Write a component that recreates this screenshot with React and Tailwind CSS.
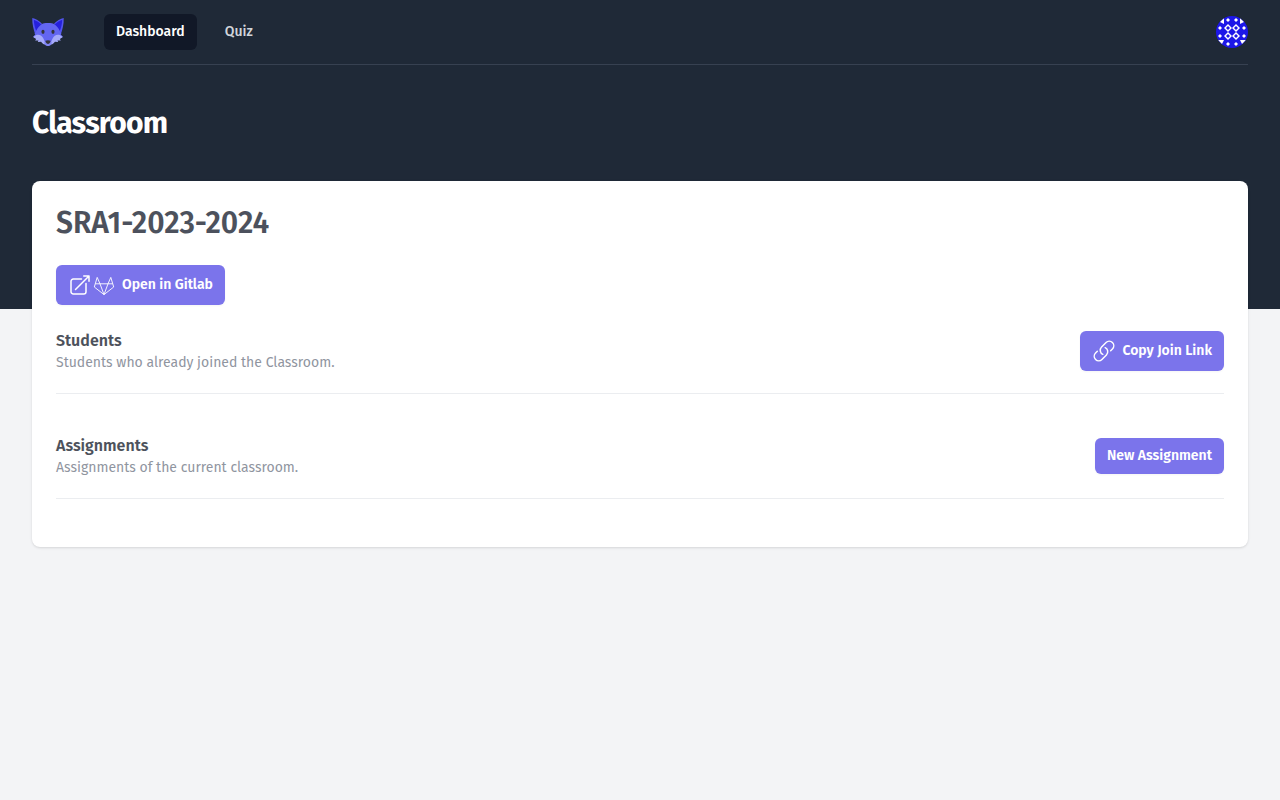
const FoxLogo = () => (
  <svg viewBox="0 0 32 32" className="size-8" role="img" aria-label="Home">
    {/* ears */}
    <path d="M0.3 2C3.5 2.6 7.5 4.8 9.8 7.6L7 17L3.4 19C1.5 13.5 0 7.5 0.3 2Z" fill="#5356ee" />
    <path d="M31.7 2C28.5 2.6 24.5 4.8 22.2 7.6L25 17L28.6 19C30.5 13.5 32 7.5 31.7 2Z" fill="#5356ee" />
    <path d="M1.8 3.7C4.6 4.7 7.6 6.6 9.6 8.6L4.4 15.2C2.8 11.7 1.8 7.4 1.8 3.7Z" fill="#2620dc" />
    <path d="M30.2 3.7C27.4 4.7 24.4 6.6 22.4 8.6L27.6 15.2C29.2 11.7 30.2 7.4 30.2 3.7Z" fill="#2620dc" />
    {/* head */}
    <path
      d="M16 7C12.8 7 10.9 7 9 8.7C6.3 10.8 4.6 13.6 3.6 16.4L2.4 17.5L3.6 18.1L1.2 20.8L16 29.2L30.8 20.8L28.4 18.1L29.6 17.5L28.4 16.4C27.4 13.6 25.7 10.8 23 8.7C21.1 7 19.2 7 16 7Z"
      fill="#6366f1"
    />
    {/* cheeks */}
    <path
      d="M4.2 19.1C7.2 18.1 10.2 19.7 11.4 22.4L13.8 27.8L12.4 28.4C10.8 27.9 9.8 26.8 9.1 25.7L5.8 26L6.5 24.6L3.1 24.5L4.2 22.9L1.1 21.1Z"
      fill="#a5aafa"
    />
    <path
      d="M27.8 19.1C24.8 18.1 21.8 19.7 20.6 22.4L18.2 27.8L19.6 28.4C21.2 27.9 22.2 26.8 22.9 25.7L26.2 26L25.5 24.6L28.9 24.5L27.8 22.9L30.9 21.1Z"
      fill="#a5aafa"
    />
    <path d="M12.2 25.4C13.8 27 18.2 27 19.8 25.4L19.4 28.2C18.3 30.6 13.7 30.6 12.6 28.2Z" fill="#8085f5" />
    <path d="M13.4 24.7Q16 23.8 18.6 24.7C18.3 26.8 16.9 28 16 28C15.1 28 13.7 26.8 13.4 24.7Z" fill="#34343b" />
    <ellipse cx="11" cy="15.8" rx="1.6" ry="2.1" fill="#34343b" />
    <ellipse cx="21" cy="15.8" rx="1.6" ry="2.1" fill="#34343b" />
  </svg>
);

const Identicon = () => (
  <svg viewBox="0 0 32 32" className="size-8 rounded-full" aria-hidden="true">
    <rect width="32" height="32" fill="#1d17e8" />
    <g fill="#fff">
      <path d="M12 2l2 2-2 2-2-2zM20 2l2 2-2 2-2-2zM12 26l2 2-2 2-2-2zM20 26l2 2-2 2-2-2z" />
      <path d="M4 10l2 2-2 2-2-2zM4 18l2 2-2 2-2-2zM28 10l2 2-2 2-2-2zM28 18l2 2-2 2-2-2z" />
      <path d="M8 2v6L4 6zM24 2v6l4-2zM2 24h6l-2 4zM30 24h-6l2 4z" />
      <path
        fillRule="evenodd"
        d="M12 8l4 4-4 4-4-4zm0 2l-2 2 2 2 2-2zM20 8l4 4-4 4-4-4zm0 2l-2 2 2 2 2-2zM12 16l4 4-4 4-4-4zm0 2l-2 2 2 2 2-2zM20 16l4 4-4 4-4-4zm0 2l-2 2 2 2 2-2z"
      />
    </g>
  </svg>
);

const OpenIcon = () => (
  <svg viewBox="0 0 24 24" className="size-6" fill="none" stroke="currentColor" strokeWidth="1.5" strokeLinecap="round" strokeLinejoin="round" aria-hidden="true">
    <path d="M13.5 6H5.25A2.25 2.25 0 003 8.25v10.5A2.25 2.25 0 005.25 21h10.5A2.25 2.25 0 0018 18.75V10.5m-10.5 6L21 3m0 0h-5.25M21 3v5.25" />
  </svg>
);

const GitlabIcon = () => (
  <svg viewBox="0 0 24 24" className="size-6" fill="none" stroke="currentColor" strokeWidth="0.9" strokeLinejoin="round" aria-hidden="true">
    <path d="M5.2 4.4L2.3 14L12 21.6L21.7 14L18.8 4.4L16 10.8H8zM3.3 10.8H8L12 21.6L16 10.8h4.7" />
  </svg>
);

const LinkIcon = () => (
  <svg viewBox="0 0 24 24" className="size-6" fill="none" stroke="currentColor" strokeWidth="1.5" strokeLinecap="round" strokeLinejoin="round" aria-hidden="true">
    <path d="M13.19 8.688a4.5 4.5 0 011.242 7.244l-4.5 4.5a4.5 4.5 0 01-6.364-6.364l1.757-1.757m13.35-.622l1.757-1.757a4.5 4.5 0 00-6.364-6.364l-4.5 4.5a4.5 4.5 0 001.242 7.244" />
  </svg>
);

const buttonClass =
  "inline-flex items-center rounded-md bg-[#4f46e5] px-3 py-2 text-sm font-semibold text-white shadow-xs hover:bg-[#6366f1]";

const Section = ({ title, description, children }) => (
  <div className="flex items-center justify-between border-b border-[#e5e7eb] pb-5">
    <div>
      <h3 className="text-base leading-6 font-semibold text-[#111827]">{title}</h3>
      <p className="text-sm text-[#6b7280]">{description}</p>
    </div>
    {children}
  </div>
);

const App = () => {
  const copyJoinLink = () => {
    navigator.clipboard?.writeText(`${window.location.href}/join`);
  };

  return (
    <div className="min-h-screen bg-[#f3f4f6] font-['Fira_Sans','Noto_Sans',sans-serif]">
      <div className="bg-[#1f2937] pb-32">
        <nav className="px-8">
          <div className="flex h-16 items-center justify-between border-b border-[#374151] box-content">
            <div className="flex items-center gap-10">
              <a href="#home">
                <FoxLogo />
              </a>
              <div className="flex gap-4 text-sm font-medium">
                <a href="#dashboard" aria-current="page" className="rounded-md bg-[#111827] px-3 py-2 text-white">
                  Dashboard
                </a>
                <a href="#quiz" className="rounded-md px-3 py-2 text-[#d1d5db] hover:bg-[#374151]">
                  Quiz
                </a>
              </div>
            </div>
            <button type="button" aria-label="Open user menu" className="rounded-full">
              <Identicon />
            </button>
          </div>
        </nav>
        <header className="px-8 py-10">
          <h1 className="text-3xl font-bold tracking-tight text-white">Classroom</h1>
        </header>
      </div>

      <main className="-mt-32 px-8 pb-12">
        <div className="rounded-lg bg-white p-6 shadow-sm">
          <div className="opacity-75">
            <h2 className="text-3xl font-semibold text-[#111827]">SRA1-2023-2024</h2>
            <div className="mt-6 flex">
              <a href="#gitlab" className={buttonClass}>
                <OpenIcon />
                <GitlabIcon />
                <span className="ml-1.5">Open in Gitlab</span>
              </a>
            </div>
            <div className="mt-6 flex flex-col gap-10 pb-6">
              <Section title="Students" description="Students who already joined the Classroom.">
                <button type="button" onClick={copyJoinLink} className={buttonClass}>
                  <LinkIcon />
                  <span className="ml-1.5">Copy Join Link</span>
                </button>
              </Section>
              <Section title="Assignments" description="Assignments of the current classroom.">
                <button type="button" className={buttonClass}>
                  New Assignment
                </button>
              </Section>
            </div>
          </div>
        </div>
      </main>
    </div>
  );
};

export default App;
